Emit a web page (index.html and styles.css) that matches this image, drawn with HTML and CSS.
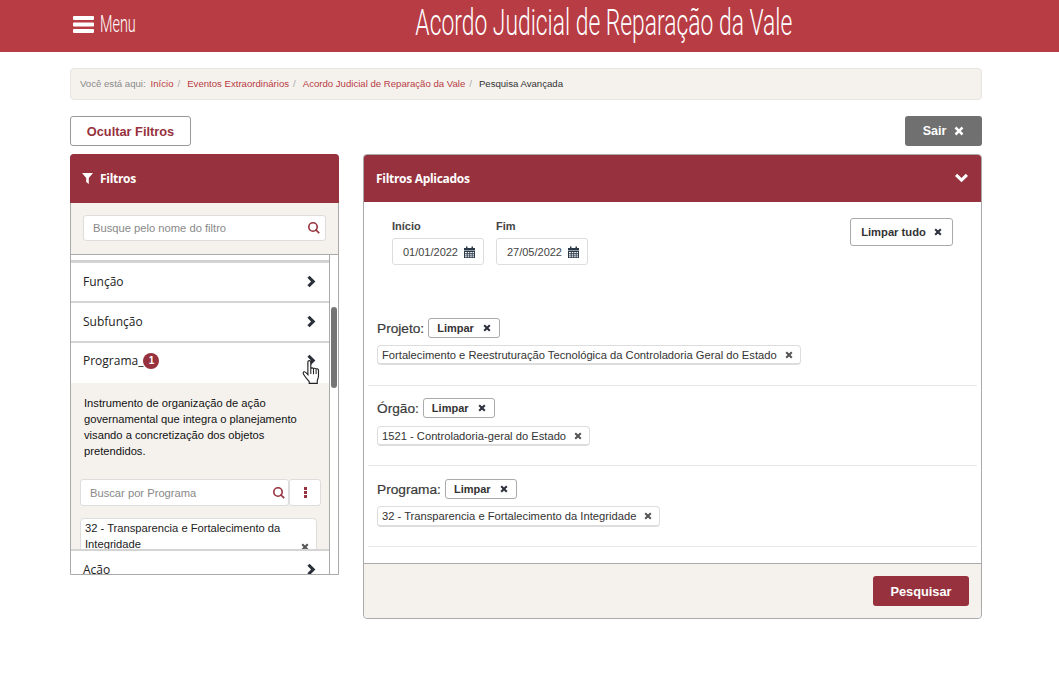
FILE: index.html
```html
<!DOCTYPE html>
<html lang="pt-BR">
<head>
    <meta charset="UTF-8">
    <title>Acordo Judicial de Reparação da Vale</title>
    <link rel="stylesheet" href="styles.css">
</head>
<body>
<svg class="sprites" width="0" height="0">
    <symbol id="i-times" viewBox="0 0 10 10"><path d="M2.4.6 5 3.2 7.6.6 9.4 2.4 6.8 5l2.6 2.6-1.8 1.8L5 6.8 2.4 9.4.6 7.6 3.2 5 .6 2.4z"/></symbol>
    <symbol id="i-chevron" viewBox="0 0 10 12"><path d="M3.2.6 8.6 6l-5.4 5.4-2-2L4.6 6 1.2 2.6z"/></symbol>
    <symbol id="i-search" viewBox="0 0 12 12"><path d="M5 0a5 5 0 1 1 0 10A5 5 0 0 1 5 0zm0 1.6a3.4 3.4 0 1 0 0 6.8 3.4 3.4 0 0 0 0-6.800z" fill-rule="evenodd"/><path d="m8 6.900 3.800 3.700-1.200 1.200L6.900 8.100z"/></symbol>
    <symbol id="i-cal" viewBox="0 0 11 12"><path d="M0 2h2V.5h1.500V2h4V.5H9V2h2v2.400H0zM0 5h11v7H0zm1 1v1.300h1.800V6zm2.700 0v1.300h1.600V6zm2.500 0v1.300h1.600V6zm2.400 0v1.300H10V6zM1 8.300v1.200h1.800V8.300zm2.700 0v1.200h1.600V8.300zm2.500 0v1.200h1.600V8.300zm2.400 0v1.200H10V8.300zM1 10.300v.9h1.800v-.9zm2.700 0v.9h1.600v-.9zm2.500 0v.9h1.600v-.9zm2.400 0v.9H10v-.9z" fill-rule="evenodd"/></symbol>
</svg>

<header class="topbar">
    <div class="topbar-inner">
        <a class="menu-link">
            <svg class="menu-icon" viewBox="0 0 21 17"><path d="M1 0h19a1 1 0 0 1 1 1v2a1 1 0 0 1-1 1H1a1 1 0 0 1-1-1V1a1 1 0 0 1 1-1zm0 6.500h19a1 1 0 0 1 1 1v2a1 1 0 0 1-1 1H1a1 1 0 0 1-1-1v-2a1 1 0 0 1 1-1zM1 13h19a1 1 0 0 1 1 1v2a1 1 0 0 1-1 1H1a1 1 0 0 1-1-1v-2a1 1 0 0 1 1-1z"/></svg>
            <span class="menu-text">Menu</span>
        </a>
        <h1 class="site-title"><span>Acordo Judicial de Reparação da Vale</span></h1>
    </div>
</header>

<main class="container">
    <nav class="breadcrumb">
        <span class="crumb-label">Você está aqui:</span>
        <a>Início</a><span class="sep">/</span>
        <a>Eventos Extraordinários</a><span class="sep">/</span>
        <a>Acordo Judicial de Reparação da Vale</a><span class="sep">/</span>
        <span class="crumb-current">Pesquisa Avançada</span>
    </nav>

    <div class="actions">
        <button class="btn-outline">Ocultar Filtros</button>
        <button class="btn-exit">Sair <svg class="ico ico-10"><use href="#i-times"/></svg></button>
    </div>

    <div class="columns">
        <aside class="panel filters">
            <div class="panel-head filters-head">
                <svg class="filter-icon" viewBox="0 0 11 11"><path d="M0 0h11L6.800 5v6L4.200 9V5z"/></svg>
                <span>Filtros</span>
            </div>
            <div class="filter-search">
                <div class="search-box">
                    <span class="placeholder">Busque pelo nome do filtro</span>
                    <svg class="ico ico-12 wine"><use href="#i-search"/></svg>
                </div>
            </div>
            <div class="filter-list">
                <div class="list-track">
                    <div class="list-stub"></div>
                    <div class="list-item">Função <svg class="ico chevron"><use href="#i-chevron"/></svg></div>
                    <div class="list-item">Subfunção <svg class="ico chevron"><use href="#i-chevron"/></svg></div>
                    <div class="list-item list-open">
                        <span class="item-name">Programa_<b class="badge">1</b></span>
                        <svg class="ico chevron"><use href="#i-chevron"/></svg>
                    </div>
                    <div class="item-body">
                        <p>Instrumento de organização de ação governamental que integra o planejamento visando a concretização dos objetos pretendidos.</p>
                        <div class="body-search">
                            <div class="search-box body-box">
                                <span class="placeholder">Buscar por Programa</span>
                                <svg class="ico ico-12 wine"><use href="#i-search"/></svg>
                            </div>
                            <div class="more-btn"><i></i><i></i><i></i></div>
                        </div>
                        <div class="picked">
                            32 - Transparencia e Fortalecimento da Integridade
                            <svg class="ico ico-8 grey"><use href="#i-times"/></svg>
                        </div>
                    </div>
                    <div class="list-item">Ação <svg class="ico chevron"><use href="#i-chevron"/></svg></div>
                </div>
                <div class="scrollbar"><div class="thumb"></div></div>
            </div>
            <svg class="cursor-hand" viewBox="0 0 17 24">
                <path d="M5.500 2c0-1.900 2.800-1.900 2.800 0v6.500c.2-1.300 2.500-1.300 2.600.1.200-1 2.300-1 2.500.4.300-.9 2.300-.7 2.300.9v5.300c0 2-.5 3-1.200 4.600v2.700H6.800v-1.700C5 18.500 2.800 16.300 1.500 14c-1-1.800-.4-3 .9-2.700.9.200 2 1.400 3.100 2.700z" fill="#fff" stroke="#222" stroke-width="1.100"/>
                <path d="M8.300 8.500v5M10.900 8.600v5M13.400 9v4.500" stroke="#222" stroke-width="1" fill="none"/>
            </svg>
        </aside>

        <section class="panel applied">
            <div class="panel-head applied-head">
                <span>Filtros Aplicados</span>
                <svg class="ico head-chevron" viewBox="0 0 12 10"><path d="M2 1.500 6 5.400 10 1.500 12 3.500 6 9.400 0 3.500z"/></svg>
            </div>
            <div class="applied-body">
                <div class="dates">
                    <div class="date-field">
                        <label>Início</label>
                        <div class="date-box">01/01/2022 <svg class="ico ico-cal"><use href="#i-cal"/></svg></div>
                    </div>
                    <div class="date-field">
                        <label>Fim</label>
                        <div class="date-box">27/05/2022 <svg class="ico ico-cal"><use href="#i-cal"/></svg></div>
                    </div>
                    <button class="btn-clear-all">Limpar tudo <svg class="ico ico-8 dark"><use href="#i-times"/></svg></button>
                </div>

                <div class="group group-first">
                    <div class="group-title">Projeto: <span class="btn-clear">Limpar <svg class="ico ico-8 dark"><use href="#i-times"/></svg></span></div>
                    <div class="tag">Fortalecimento e Reestruturação Tecnológica da Controladoria Geral do Estado <svg class="ico ico-8 grey"><use href="#i-times"/></svg></div>
                </div>
                <div class="group group-second">
                    <div class="group-title">Órgão: <span class="btn-clear">Limpar <svg class="ico ico-8 dark"><use href="#i-times"/></svg></span></div>
                    <div class="tag">1521 - Controladoria-geral do Estado <svg class="ico ico-8 grey"><use href="#i-times"/></svg></div>
                </div>
                <div class="group group-third">
                    <div class="group-title">Programa: <span class="btn-clear">Limpar <svg class="ico ico-8 dark"><use href="#i-times"/></svg></span></div>
                    <div class="tag">32 - Transparencia e Fortalecimento da Integridade <svg class="ico ico-8 grey"><use href="#i-times"/></svg></div>
                </div>
            </div>
            <div class="applied-foot">
                <button class="btn-search">Pesquisar</button>
            </div>
        </section>
    </div>
</main>
</body>
</html>
```
FILE: styles.css
```css
body {
    margin: 0;
    background: #fff;
    color: #222;
    font-family: "Liberation Sans", Arial, sans-serif;
    font-size: 12px;
}

.sprites {
    display: block;
    height: 0;
}

button {
    font-family: inherit;
    cursor: pointer;
}

.ico {
    display: inline-block;
    fill: currentColor;
    flex: none;
}

.ico-8 { width: 8px; height: 8px; }
.ico-10 { width: 10px; height: 10px; }
.ico-12 { width: 12px; height: 12px; }
.ico-cal { width: 11px; height: 12px; color: #2b3a4a; }
.wine { color: #96313d; }
.grey { color: #555; }
.dark { color: #2a2f3a; }

/* topo */
.topbar {
    height: 52px;
    background: #b83c44;
    color: #fff;
}

.topbar-inner {
    position: relative;
    width: 912px;
    height: 100%;
    margin-left: 70px;
    padding-left: 156px;
    box-sizing: border-box;
    display: flex;
    align-items: center;
    justify-content: center;
}

.menu-link {
    position: absolute;
    left: 3px;
    top: 13px;
    display: flex;
    align-items: center;
    gap: 6px;
}

.menu-icon {
    width: 21px;
    height: 17px;
    fill: #fff;
}

.menu-text {
    display: inline-block;
    width: 36px;
    font-family: "Roboto", sans-serif;
    font-weight: 300;
    font-size: 24px;
    line-height: 22px;
    transform: scaleX(.6);
    transform-origin: left center;
}

.site-title {
    margin: 0 0 6px;
    font-family: "Roboto", sans-serif;
    font-weight: 300;
    font-size: 36px;
    line-height: 42px;
    white-space: nowrap;
}

.site-title span {
    display: inline-block;
    transform: scaleX(.635);
}

/* conteudo */
.container {
    width: 912px;
    margin: 16px 0 0 70px;
}

.breadcrumb {
    height: 29px;
    padding: 0 9px 1px;
    display: flex;
    align-items: center;
    background: #f5f2ee;
    border: 1px solid #e8e5e0;
    border-radius: 4px;
    font-size: 9.600px;
    white-space: pre;
}

.crumb-label {
    color: #8a8a8a;
    margin-right: 5px;
}

.breadcrumb a { color: #b83c44; }
.sep { color: #aaa; margin: 0 7px 0 4px; }
.crumb-current { color: #333; }

.actions {
    display: flex;
    justify-content: space-between;
    margin-top: 16px;
}

.btn-outline {
    width: 121px;
    height: 30px;
    padding: 0;
    background: #fff;
    border: 1px solid #999;
    border-radius: 3px;
    color: #96313d;
    font-size: 12.800px;
    font-weight: bold;
}

.btn-exit {
    width: 77px;
    height: 30px;
    padding: 0;
    display: flex;
    align-items: center;
    justify-content: center;
    gap: 8px;
    background: #707070;
    border: 0;
    border-radius: 3px;
    color: #fff;
    font-size: 12.500px;
    font-weight: bold;
}

.columns {
    display: flex;
    justify-content: space-between;
    align-items: flex-start;
    margin-top: 8px;
}

.panel {
    box-sizing: border-box;
    position: relative;
    border: 1px solid #aaa;
    border-radius: 4px;
    background: #fff;
}

.panel-head {
    background: #96313d;
    color: #fff;
    font-family: "Open Sans", sans-serif;
    font-weight: 700;
    font-size: 12px;
    letter-spacing: -.3px;
    display: flex;
    align-items: center;
}

/* filtros */
.filters {
    width: 269px;
    height: 421px;
    border-radius: 4px 4px 0 0;
}

.filters-head {
    height: 49px;
    margin: -1px -1px 0;
    padding-left: 12px;
    gap: 7px;
    border-radius: 4px 4px 0 0;
}

.filter-icon {
    width: 11px;
    height: 11px;
    fill: #fff;
}

.filter-search {
    height: 52px;
    box-sizing: border-box;
    padding: 12px;
    background: #f5f2ee;
    border-bottom: 1px solid #aaa;
}

.search-box {
    height: 26px;
    box-sizing: border-box;
    display: flex;
    align-items: center;
    justify-content: space-between;
    padding: 0 5px 0 9px;
    background: #fff;
    border: 1px solid #ddd;
    border-radius: 3px;
}

.placeholder {
    color: #888;
    font-size: 11.200px;
}

.filter-list {
    position: relative;
    height: 319px;
    overflow: hidden;
}

.list-track {
    width: 258px;
}

.list-stub {
    height: 6px;
    box-sizing: border-box;
    border-bottom: 1px solid #ccc;
}

.list-item {
    height: 40px;
    box-sizing: border-box;
    display: flex;
    align-items: center;
    justify-content: space-between;
    padding: 0 12px 2px;
    border-top: 2px solid #d4d4d4;
    background: #fff;
    font-family: "Open Sans", sans-serif;
    font-size: 12px;
    color: #222;
}

.list-open {
    height: 42px;
    padding-bottom: 5px;
}

.item-name {
    display: flex;
    align-items: center;
}

.badge {
    width: 16px;
    height: 16px;
    display: inline-block;
    border-radius: 50%;
    background: #96313d;
    color: #fff;
    font-family: "Liberation Sans", sans-serif;
    font-size: 10px;
    line-height: 16px;
    text-align: center;
}

.chevron {
    width: 11px;
    height: 13px;
    color: #2a2f3a;
}

.item-body {
    height: 166px;
    overflow: hidden;
    box-sizing: border-box;
    background: #f5f2ee;
    padding: 12px 9px 0;
}

.item-body p {
    margin: 0 0 20px 4px;
    width: 225px;
    font-size: 11.200px;
    line-height: 16px;
    color: #111;
}

.body-search {
    display: flex;
    margin-right: -1px;
}

.body-box {
    flex: 1;
    height: 27px;
    padding-right: 3px;
}

.more-btn {
    width: 32px;
    height: 27px;
    box-sizing: border-box;
    display: flex;
    flex-direction: column;
    align-items: center;
    justify-content: center;
    gap: 1px;
    background: #fff;
    border: 1px solid #ddd;
    border-radius: 3px;
}

.more-btn i {
    width: 3px;
    height: 3px;
    background: #96313d;
}

.picked {
    position: relative;
    margin-top: 12px;
    width: 237px;
    box-sizing: border-box;
    padding: 1px 30px 3px 4px;
    background: #fff;
    border: 1px solid #ddd;
    border-radius: 4px;
    font-size: 11.200px;
    line-height: 16px;
    color: #222;
}

.picked .ico {
    position: absolute;
    right: 7px;
    bottom: 4px;
}

.scrollbar {
    position: absolute;
    right: 0;
    top: 0;
    bottom: 0;
    width: 9px;
    box-sizing: border-box;
    border-left: 1px solid #aaa;
    background: #fff;
}

.thumb {
    width: 6px;
    height: 81px;
    margin: 52px 0 0 1px;
    background: #757575;
    border-radius: 3px;
}

.cursor-hand {
    position: absolute;
    left: 231px;
    top: 205px;
    width: 18px;
    height: 25px;
}

/* filtros aplicados */
.applied {
    width: 619px;
    height: 465px;
    display: flex;
    flex-direction: column;
}

.applied-head {
    height: 47px;
    flex: none;
    padding: 0 13px 0 12px;
    justify-content: space-between;
    border-radius: 3px 3px 0 0;
}

.head-chevron {
    width: 13px;
    height: 11px;
    margin-bottom: 3px;
}

.applied-body {
    flex: 1;
    padding: 0 4px;
}

.dates {
    height: 116px;
    display: flex;
    align-items: flex-start;
    gap: 12px;
    padding: 18px 24px 0;
    box-sizing: border-box;
}

.date-field label {
    display: block;
    font-size: 11px;
    font-weight: bold;
    color: #444;
    line-height: 13px;
    margin-bottom: 5px;
}

.date-box {
    width: 92px;
    height: 27px;
    box-sizing: border-box;
    display: flex;
    align-items: center;
    justify-content: flex-end;
    gap: 6px;
    padding-right: 8px;
    border: 1px solid #ddd;
    border-radius: 3px;
    font-size: 11px;
    color: #444;
}

.btn-clear-all {
    margin-left: auto;
    margin-top: -2px;
    width: 103px;
    height: 28px;
    padding: 0;
    display: flex;
    align-items: center;
    justify-content: center;
    gap: 8px;
    background: #fff;
    border: 1px solid #aaa;
    border-radius: 3px;
    color: #333;
    font-size: 11.200px;
    font-weight: bold;
}

.group {
    height: 80px;
    box-sizing: border-box;
    padding: 13px 9px 0;
    border-bottom: 1px solid #e8e8e8;
}

.group-first {
    height: 68px;
    padding-top: 0;
}

.group-second {
    padding-top: 12px;
}

.group-second .tag {
    margin-top: 8px;
}

.group-third {
    height: 81px;
}

.group-third .tag {
    height: 21px;
}

.group-title {
    display: flex;
    align-items: center;
    gap: 4px;
    height: 20px;
    font-size: 13.700px;
    color: #3a3a3a;
    -webkit-text-stroke: .2px #3a3a3a;
}

.btn-clear {
    width: 72px;
    height: 20px;
    box-sizing: border-box;
    display: inline-flex;
    align-items: center;
    gap: 9px;
    padding: 0 8px;
    border: 1px solid #aaa;
    border-radius: 3px;
    font-size: 11px;
    font-weight: bold;
    -webkit-text-stroke: 0;
    color: #333;
}

.tag {
    display: inline-flex;
    align-items: center;
    gap: 8px;
    height: 20px;
    box-sizing: border-box;
    margin-top: 7px;
    padding: 0 7px 0 4px;
    background: #fff;
    border: 1px solid #ddd;
    border-bottom: 2px solid #ddd;
    border-radius: 4px;
    font-size: 11.200px;
    color: #333;
}

.applied-foot {
    height: 55px;
    flex: none;
    box-sizing: border-box;
    display: flex;
    justify-content: flex-end;
    align-items: center;
    padding-right: 12px;
    background: #f5f2ee;
    border-top: 1px solid #aaa;
    border-radius: 0 0 4px 4px;
}

.btn-search {
    width: 96px;
    height: 30px;
    padding: 0;
    background: #96313d;
    border: 0;
    border-radius: 3px;
    color: #fff;
    font-size: 12.800px;
    font-weight: bold;
}
```
